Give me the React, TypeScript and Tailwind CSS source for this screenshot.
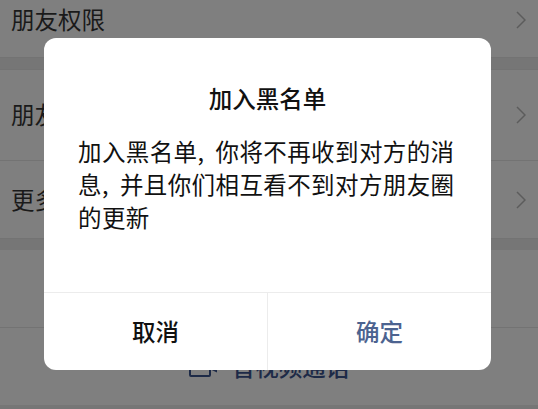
const font = "font-['Noto_Sans_CJK_SC',sans-serif]";

const Chevron = () => (
  <svg width="10" height="18" viewBox="0 0 10 18" fill="none" stroke="#5c5c5c" strokeWidth="1.5">
    <path d="M1 1l8 8-8 8" />
  </svg>
);

const Row = ({ label, className }: { label: string; className: string }) => (
  <div className={`flex items-center justify-between pl-[11px] pr-[12px] ${className}`}>
    <span className="text-[23.5px] text-[#1a1a1a]">{label}</span>
    <Chevron />
  </div>
);

const Comma = () => <span className="inline-block w-[18px]">,</span>;

export default function App() {
  return (
    <div className={`relative h-[409px] w-[538px] overflow-hidden bg-[#7f7f7f] ${font}`}>
      <Row label="朋友权限" className="h-[57px] pb-[17px]" />
      <div className="h-[13px] border-y border-[#737373] bg-[#767676]" />
      <Row label="朋友" className="h-[91px] border-b border-[#737373]" />
      <Row label="更多" className="h-[77px]" />
      <div className="h-[12px] border-t border-[#737373] bg-[#767676]" />
      <div className="h-[78px] border-b border-[#737373]" />
      <div className="flex h-[77px] items-center justify-center gap-[15px] text-[#1d2a47]">
        <svg width="28" height="20" viewBox="0 0 28 20" fill="none" stroke="#1d2a47" strokeWidth="2">
          <rect x="1" y="1" width="20" height="18" rx="1" />
          <path d="M21 9l6-3v8l-6-3" />
        </svg>
        <span className="text-[23.5px] font-medium">音视频通话</span>
      </div>
      <div className="h-[4px] bg-[#767676]" />

      <div className="absolute left-[44px] top-[38px] flex h-[332px] w-[447px] flex-col rounded-[12px] bg-white">
        <div className="flex flex-1 flex-col">
          <h2 className="pt-[43px] text-center text-[23.5px] leading-[34px] font-medium text-[#111111]">加入黑名单</h2>
          <p className="mt-[20px] pl-[34px] pr-[30px] text-[23.5px] leading-[33px] tracking-[0.4px] text-[#111111]">
            加入黑名单<Comma />你将不再收到对方的消息<Comma />并且你们相互看不到对方朋友圈的更新
          </p>
        </div>
        <div className="flex h-[78px] border-t border-[#ececec] text-[23.5px]">
          <button className="flex-1 border-r border-[#ececec] font-medium text-[#111111]">取消</button>
          <button className="flex-1 font-medium text-[#4c6390]">确定</button>
        </div>
      </div>
    </div>
  );
}
